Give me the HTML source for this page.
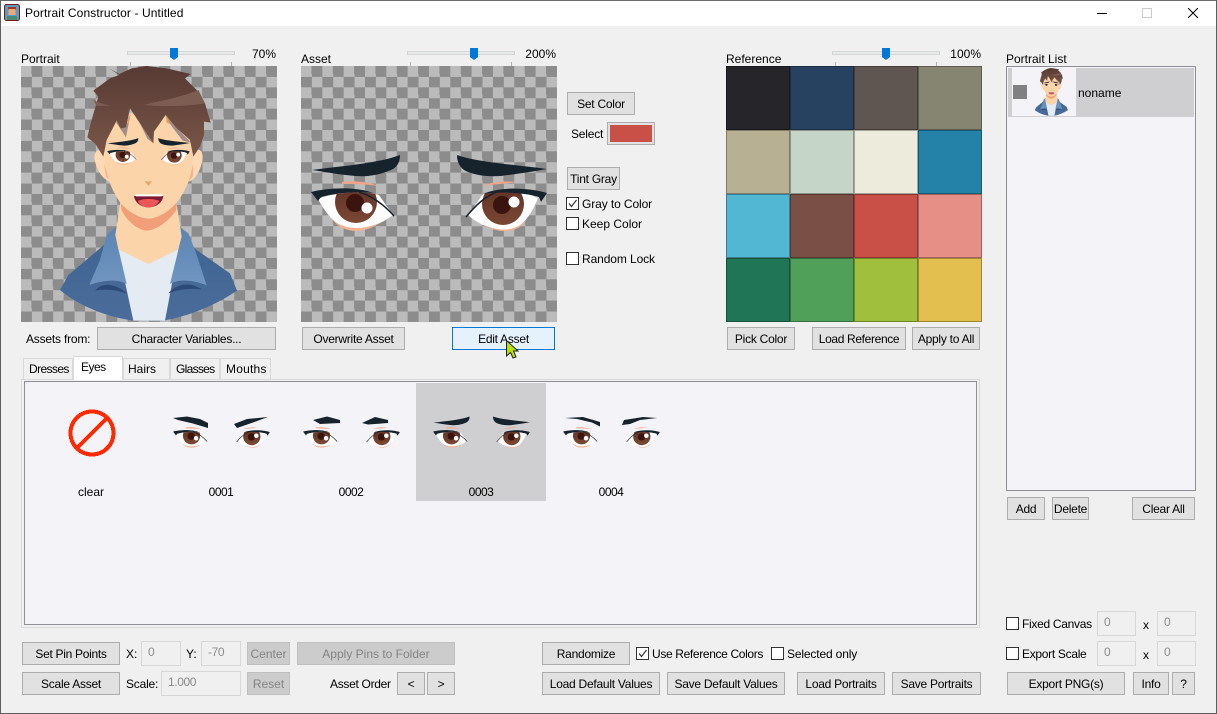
<!DOCTYPE html>
<html><head><meta charset="utf-8"><title>Portrait Constructor - Untitled</title>
<style>
*{box-sizing:border-box}
html,body{margin:0;padding:0;background:#f0f0f0;overflow:hidden}
#w{position:relative;width:1217px;height:714px;background:#f0f0f0;font:12px "Liberation Sans",sans-serif;color:#000;overflow:hidden}
#w div,#w svg.a{position:absolute}
.b{background:#e1e1e1;border:1px solid #adadad;display:flex;align-items:center;justify-content:center;white-space:nowrap;height:23px;top:0;letter-spacing:-.25px}
.d{background:#ccc;border:1px solid #bfbfbf;color:#838383;letter-spacing:0}
.t{white-space:nowrap;line-height:14px}
.n{letter-spacing:-.3px}
.i{background:#f0f0f0;border:1px solid #d7d7d7;color:#8b8b8b;padding:3px 0 0 6px;height:25px;white-space:nowrap;letter-spacing:-.4px}
.c{width:13px;height:13px;background:#fff;border:1px solid #333}
.ck{position:absolute;display:block;left:0;top:0}
.chk{background:repeating-conic-gradient(#8c8c8c 0 25%,#bbb 0 50%) 0 0/21.333px 21.333px;width:256px;height:256px;top:66px;overflow:hidden}
.tr{width:108px;height:4px;top:51px;background:#e7eaea;border:1px solid #d6d6d6}
.tk{width:1px;height:4px;top:62px;background:#b5b5b5}
.tab{top:358px;height:21px;background:#f0f0f0;border:1px solid #d9d9d9;border-bottom:none;padding:3px 0 0 5px;line-height:15px;white-space:nowrap}
.cell{width:64px;height:64px;box-shadow:inset 0 0 0 1px rgba(0,0,0,.3)}
.l{top:485px;width:130px;text-align:center;line-height:14px;letter-spacing:-.5px}
</style></head><body><div id="w">
<svg width="0" height="0" style="position:absolute"><defs>
<linearGradient id="hg" x1="0" y1="0" x2="0" y2="1"><stop offset="0" stop-color="#573a34"/><stop offset="1" stop-color="#7a5648"/></linearGradient>
<linearGradient id="jg" x1="0" y1="0" x2="0" y2="1"><stop offset="0" stop-color="#3f6491"/><stop offset="1" stop-color="#4a6c9a"/></linearGradient>
<linearGradient id="cg" x1="0" y1="0" x2="0" y2="1"><stop offset="0" stop-color="#5b83b2"/><stop offset="1" stop-color="#7096c0"/></linearGradient>
<linearGradient id="ir" x1="0" y1="0" x2="0" y2="1"><stop offset="0" stop-color="#5e2f25"/><stop offset="1" stop-color="#7a4833"/></linearGradient>
<clipPath id="el"><path d="M17 133C28 128 60 123 78 129L92 149C80 158 66 164 52 164C38 163 26 150 17 133Z"/></clipPath>
<clipPath id="er"><path d="M237 132C226 126 200 122 182 128L167 149C177 158 190 164 206 164C220 163 230 150 237 132Z"/></clipPath>
<g id="eyes">
<path fill="#f0a58a" d="M41 116C52 114 68 116 78 120C66 118 52 118 41 118Z"/>
<path fill="#f0a58a" d="M181 120C192 115 206 115 216 116C205 118 192 118 181 120Z"/>
<path fill="#fff" d="M17 133C28 128 60 123 78 129L92 149C80 158 66 164 52 164C38 163 26 150 17 133Z"/>
<path fill="#f4b28e" d="M32 154C42 163 60 165 78 157C64 168 42 168 32 154Z"/>
<g clip-path="url(#el)"><circle cx="55" cy="136" r="21" fill="url(#ir)"/><circle cx="54" cy="137" r="9" fill="#3a1510"/></g>
<circle cx="66" cy="142" r="5.500" fill="#fff"/>
<path fill="#16222c" d="M10 126C25 122 55 120 72 127C55 125 35 127 20 131L17 135Z"/>
<path fill="none" stroke="#16222c" stroke-width="1.500" d="M58 126C72 130 84 140 93 150"/>
<path fill="#fff" d="M237 132C226 126 200 122 182 128L167 149C177 158 190 164 206 164C220 163 230 150 237 132Z"/>
<path fill="#f4b28e" d="M182 158C196 166 214 166 226 154C216 168 196 168 182 158Z"/>
<g clip-path="url(#er)"><circle cx="202" cy="138" r="21" fill="url(#ir)"/><circle cx="201" cy="139" r="9" fill="#3a1510"/></g>
<circle cx="213" cy="136" r="5.500" fill="#fff"/>
<path fill="#16222c" d="M246 127C230 122 200 120 182 128C200 125 225 127 238 131L240 136Z"/>
<path fill="none" stroke="#16222c" stroke-width="1.500" d="M198 125C184 130 174 140 165 151"/>
</g>
<g id="brows3">
<path fill="#16222c" d="M11 104C40 100 75 98 99 89C99 95 97 100 92 103C80 109 65 111 55 110C40 109 25 106 11 104Z"/>
<path fill="#16222c" d="M156 89C175 96 215 99 246 103C230 106 215 108 200 110C185 111 172 109 163 104C158 100 156 95 156 89Z"/>
</g>
<g id="portrait">
<path fill="url(#jg)" d="M180 870L205 825L300 745L360 690L530 690L590 750L690 820L711 872C640 920 560 950 490 962H400C320 950 240 920 180 870Z"/>
<path fill="#e4ebf3" d="M352 740L445 790L537 740L495 962H400Z"/>
<path fill="#2c4a78" d="M285 872C305 845 350 850 382 882C350 868 315 866 285 872Z"/>
<path fill="#2c4a78" d="M505 880C530 850 570 845 605 868C570 864 535 868 505 880Z"/>
<path fill="url(#cg)" d="M268 855L300 780L320 705L360 670L348 710L356 750L380 852C350 835 305 842 268 855Z"/>
<path fill="url(#cg)" d="M620 856L585 750L565 700L528 672L545 710L535 750L510 852C540 835 585 842 620 856Z"/>
<path fill="#fcd4a9" d="M362 600H528L545 710L535 748L445 792L355 748L346 705Z"/>
<path fill="#f19f78" d="M362 600L364 630C385 670 420 692 440 692C470 690 505 665 529 630L530 600Z"/>
<path fill="#ffd8b4" d="M283 470C285 445 305 445 318 455L332 545C305 540 285 500 283 470Z"/>
<path fill="#ffd8b4" d="M608 470C606 445 590 445 578 455L565 545C590 540 606 500 608 470Z"/>
<path fill="#f5b08e" d="M312 490L332 545L318 530Z"/>
<path fill="#f5b08e" d="M580 490L565 545L578 530Z"/>
<path fill="#fcd4a9" d="M315 340H580L578 480C575 530 560 570 528 610C500 640 470 655 445 656C420 655 390 640 362 610C335 570 318 530 315 480Z"/>
<path fill="#a08c88" d="M345 362L378 412L392 340L378 380Z"/>
<path fill="#a08c88" d="M415 360L442 416L460 430L450 395Z"/>
<path fill="#a08c88" d="M497 345L530 385L574 428L548 422L510 372Z"/>
<path fill="url(#hg)" d="M328 205L358 222L395 205L440 198L500 205L572 222L555 235L590 270L615 310L632 368L612 365L612 405L600 440L580 470L570 420L530 385L497 345L462 395L460 430L420 370L390 325L378 382L362 385L350 362L320 420L310 470L285 430L262 412L272 370L295 290L280 272L330 235L358 225Z"/>
<path fill="#7d5c52" d="M280 300C300 310 320 315 335 317L290 318Z"/>
<path fill="#7d5c52" d="M430 315C490 300 550 290 595 270L615 310C570 317 500 322 430 315Z"/>
<path fill="#e8a050" d="M382 365L388 340L386 375Z"/>
<path fill="#e8a050" d="M497 345L510 372L500 368Z"/>
<use href="#eyes" transform="translate(311 321) scale(1.05)"/>
<use href="#brows3" transform="translate(311 321) scale(1.05)"/>
<path fill="#e4a56a" d="M433 542C440 546 450 546 457 542L445 558Z"/>
<path fill="#7a1c30" d="M402 588H490C488 606 470 622 445 622C422 622 404 606 402 588Z"/>
<path fill="#fff" d="M405 583H488L486 589H408Z"/>
<path fill="#ec5656" d="M413 603C430 595 462 595 478 603C470 616 458 622 445 622C432 622 420 616 413 603Z"/>
</g>
</defs></svg>

<!-- title bar -->
<div style="left:0;top:0;width:1217px;height:26px;background:#fff"></div>
<svg class="a" style="left:4px;top:4px" width="16" height="17" viewBox="0 0 16 17"><rect x=".5" y=".5" width="15" height="16" rx="2" fill="#5a9bc8" stroke="#7a1a10"/><rect x="4" y="3" width="8" height="3" fill="#a33a1c"/><rect x="4.500" y="5" width="7" height="6" fill="#f0a878"/><rect x="3" y="12" width="10" height="4" fill="#4a8a70"/></svg>
<div class="t" style="left:25px;top:6px;letter-spacing:.1px">Portrait Constructor - Untitled</div>
<div style="left:1097px;top:13px;width:10px;height:1px;background:#000"></div>
<div style="left:1142px;top:8px;width:10px;height:10px;border:1px solid #ccc"></div>
<svg class="a" style="left:1188px;top:8px" width="10" height="10"><path d="M0 0L10 10M10 0L0 10" stroke="#000" fill="none"/></svg>

<!-- labels & sliders -->
<div class="t" style="left:21px;top:52px">Portrait</div>
<div class="t" style="left:301px;top:52px">Asset</div>
<div class="t" style="left:726px;top:52px">Reference</div>
<div class="t" style="left:1006px;top:52px">Portrait List</div>
<div class="tr" style="left:127px"></div><div class="tk" style="left:130px"></div><div class="tk" style="left:231px"></div>
<div class="tr" style="left:407px"></div><div class="tk" style="left:410px"></div><div class="tk" style="left:511px"></div>
<div class="tr" style="left:832px"></div><div class="tk" style="left:835px"></div><div class="tk" style="left:936px"></div>
<svg class="a" style="left:170px;top:48px" width="8" height="12"><path d="M0 0H8V9L4 12L0 9Z" fill="#0078d7"/></svg>
<svg class="a" style="left:470px;top:48px" width="8" height="12"><path d="M0 0H8V9L4 12L0 9Z" fill="#0078d7"/></svg>
<svg class="a" style="left:882px;top:48px" width="8" height="12"><path d="M0 0H8V9L4 12L0 9Z" fill="#0078d7"/></svg>
<div class="t" style="right:941px;top:47px">70%</div>
<div class="t" style="right:661px;top:47px">200%</div>
<div class="t" style="right:236px;top:47px">100%</div>

<!-- portrait -->
<div class="chk" style="left:21px"><svg width="256" height="256" viewBox="63 198 768 768"><use href="#portrait"/></svg></div>
<!-- asset -->
<div class="chk" style="left:301px"><svg width="256" height="256" viewBox="0 0 256 256"><use href="#eyes"/><use href="#brows3"/></svg></div>

<div class="t n" style="left:26px;top:332px;letter-spacing:-.2px">Assets from:</div>
<div class="b" style="left:97px;top:327px;width:179px">Character Variables...</div>
<div class="b" style="left:302px;top:327px;width:103px">Overwrite Asset</div>
<div class="b" style="left:452px;top:327px;width:103px;background:#e5f1fb;border-color:#0078d7">Edit Asset</div>

<div class="b" style="left:567px;top:92px;width:68px">Set Color</div>
<div class="t" style="left:571px;top:127px;letter-spacing:-.2px">Select</div>
<div class="b" style="left:607px;top:122px;width:48px"><div style="left:2px;top:2px;width:42px;height:17px;background:#c85047"></div></div>
<div class="b" style="left:567px;top:167px;width:53px">Tint Gray</div>
<div class="c" style="left:566px;top:197px"><svg class="ck" width="11" height="11"><path d="M2 5.500L4.500 8.500L9.500 2" fill="none" stroke="#333" stroke-width="1.200"/></svg></div>
<div class="t" style="left:582px;top:197px;letter-spacing:-.1px">Gray to Color</div>
<div class="c" style="left:566px;top:217px"></div>
<div class="t" style="left:582px;top:217px">Keep Color</div>
<div class="c" style="left:566px;top:252px"></div>
<div class="t" style="left:582px;top:252px;letter-spacing:-.1px">Random Lock</div>

<!-- reference -->
<div class="cell" style="left:726px;top:66px;background:#25252a"></div>
<div class="cell" style="left:790px;top:66px;background:#274260"></div>
<div class="cell" style="left:854px;top:66px;background:#605651"></div>
<div class="cell" style="left:918px;top:66px;background:#868572"></div>
<div class="cell" style="left:726px;top:130px;background:#b8b093"></div>
<div class="cell" style="left:790px;top:130px;background:#c5d5c8"></div>
<div class="cell" style="left:854px;top:130px;background:#ecebdc"></div>
<div class="cell" style="left:918px;top:130px;background:#2481a8"></div>
<div class="cell" style="left:726px;top:194px;background:#52b7d2"></div>
<div class="cell" style="left:790px;top:194px;background:#7a4f45"></div>
<div class="cell" style="left:854px;top:194px;background:#c85047"></div>
<div class="cell" style="left:918px;top:194px;background:#e68f87"></div>
<div class="cell" style="left:726px;top:258px;background:#207556"></div>
<div class="cell" style="left:790px;top:258px;background:#51a05a"></div>
<div class="cell" style="left:854px;top:258px;background:#a0bf3d"></div>
<div class="cell" style="left:918px;top:258px;background:#e2bf4f"></div>
<div class="b" style="left:727px;top:327px;width:68px">Pick Color</div>
<div class="b" style="left:812px;top:327px;width:94px;letter-spacing:-.35px">Load Reference</div>
<div class="b" style="left:912px;top:327px;width:68px">Apply to All</div>

<!-- tabs -->
<div style="left:21px;top:379px;width:959px;height:249px;background:#f0f0f0;border:1px solid #d9d9d9"></div>
<div class="tab" style="left:23px;width:50px;letter-spacing:-.6px">Dresses</div>
<div class="tab" style="left:123px;width:47px;padding-left:4px">Hairs</div>
<div class="tab" style="left:170px;width:50px;letter-spacing:-.7px">Glasses</div>
<div class="tab" style="left:220px;width:51px;letter-spacing:.2px">Mouths</div>
<div class="tab" style="left:73px;top:356px;width:50px;height:24px;background:#fff;padding:3px 0 0 7px;letter-spacing:-.5px;z-index:2">Eyes</div>
<div style="left:24px;top:381px;width:953px;height:244px;background:#f3f3f8;border:1px solid #8e8e94"></div>
<div style="left:416px;top:383px;width:130px;height:118px;background:#cfcfd1"></div>
<svg class="a" style="left:0;top:0" width="1217" height="714" viewBox="0 0 1217 714">
<g shape-rendering="crispEdges">
<circle cx="92" cy="433" r="21.500" fill="none" stroke="#ff2a00" stroke-width="4"/>
<path d="M77 448L107 418" stroke="#ff2a00" stroke-width="4" fill="none"/>
</g>
<use href="#eyes" transform="translate(169 380) scale(.41)"/>
<use href="#eyes" transform="translate(299 380) scale(.41)"/>
<use href="#eyes" transform="translate(429 380) scale(.41)"/>
<use href="#brows3" transform="translate(429 380) scale(.41)"/>
<use href="#eyes" transform="translate(559 380) scale(.41)"/>
<g fill="#16222c">
<path d="M173 418L187 416.500L200 419L208 423L208 428L193 423.500L178 420Z"/>
<path d="M234 424L247 419L268 417L253 422.500L237 428Z"/>
<path d="M313 420L327 416.500L340 420L340 423L320 424Z"/>
<path d="M362 423L375 417L388 420L388 423L368 424.500Z"/>
<path d="M565 418L583 417L600 422L600 426.500L592 422.500L577 419Z"/>
<path d="M622 425L624 420L643 417L657 418L640 420L630 424Z"/>
</g>
</svg>
<div class="l" style="left:26px;letter-spacing:0">clear</div>
<div class="l" style="left:156px">0001</div>
<div class="l" style="left:286px">0002</div>
<div class="l" style="left:416px">0003</div>
<div class="l" style="left:546px">0004</div>

<!-- portrait list -->
<div style="left:1006px;top:66px;width:190px;height:425px;background:#f3f3f8;border:1px solid #8e8e94"></div>
<div style="left:1008px;top:68px;width:186px;height:49px;background:#cfcfd1"></div>
<div style="left:1012px;top:68px;width:64px;height:48px;background:#f3f3f8"></div>
<div style="left:1013px;top:85px;width:14px;height:14px;background:#808080"></div>
<svg class="a" style="left:1012px;top:68px" width="64" height="48" viewBox="-184 198 1024 768"><use href="#portrait"/></svg>
<div class="t" style="left:1078px;top:86px">noname</div>
<div class="b" style="left:1007px;top:497px;width:38px">Add</div>
<div class="b" style="left:1052px;top:497px;width:37px">Delete</div>
<div class="b" style="left:1132px;top:497px;width:63px">Clear All</div>

<div class="c" style="left:1006px;top:617px"></div>
<div class="t n" style="left:1022px;top:617px">Fixed Canvas</div>
<div class="i" style="left:1097px;top:611px;width:39px">0</div>
<div class="t" style="left:1143px;top:618px">x</div>
<div class="i" style="left:1157px;top:611px;width:39px">0</div>
<div class="c" style="left:1006px;top:647px"></div>
<div class="t n" style="left:1022px;top:647px">Export Scale</div>
<div class="i" style="left:1097px;top:641px;width:39px">0</div>
<div class="t" style="left:1143px;top:648px">x</div>
<div class="i" style="left:1157px;top:641px;width:39px">0</div>
<div class="b" style="left:1007px;top:672px;width:118px">Export PNG(s)</div>
<div class="b" style="left:1133px;top:672px;width:36px">Info</div>
<div class="b" style="left:1172px;top:672px;width:23px">?</div>

<!-- bottom -->
<div class="b" style="left:22px;top:642px;width:98px;letter-spacing:-.3px">Set Pin Points</div>
<div class="t" style="left:126px;top:647px">X:</div>
<div class="i" style="left:141px;top:641px;width:40px">0</div>
<div class="t" style="left:186px;top:647px">Y:</div>
<div class="i" style="left:201px;top:641px;width:40px">-70</div>
<div class="b d" style="left:247px;top:642px;width:43px">Center</div>
<div class="b d" style="left:297px;top:642px;width:158px">Apply Pins to Folder</div>
<div class="b" style="left:22px;top:672px;width:98px">Scale Asset</div>
<div class="t" style="left:126px;top:677px;letter-spacing:-.2px">Scale:</div>
<div class="i" style="left:161px;top:671px;width:80px">1.000</div>
<div class="b d" style="left:247px;top:672px;width:43px">Reset</div>
<div class="t n" style="left:330px;top:677px">Asset Order</div>
<div class="b" style="left:397px;top:672px;width:28px">&lt;</div>
<div class="b" style="left:427px;top:672px;width:28px">&gt;</div>

<div class="b" style="left:542px;top:642px;width:88px">Randomize</div>
<div class="c" style="left:636px;top:647px"><svg class="ck" width="11" height="11"><path d="M2 5.500L4.500 8.500L9.500 2" fill="none" stroke="#333" stroke-width="1.200"/></svg></div>
<div class="t" style="left:652px;top:647px;letter-spacing:-.35px">Use Reference Colors</div>
<div class="c" style="left:771px;top:647px"></div>
<div class="t" style="left:787px;top:647px;letter-spacing:-.15px">Selected only</div>
<div class="b" style="left:542px;top:672px;width:118px">Load Default Values</div>
<div class="b" style="left:667px;top:672px;width:118px">Save Default Values</div>
<div class="b" style="left:797px;top:672px;width:88px">Load Portraits</div>
<div class="b" style="left:892px;top:672px;width:89px">Save Portraits</div>

<!-- cursor -->
<svg class="a" style="left:504px;top:338px;z-index:5" width="18" height="22"><path d="M2.500 2.500L14 13L9.500 13L12 19L9 20L6.500 14.500L2.500 18Z" fill="#b8e000" stroke="#222" stroke-width="1"/></svg>

<!-- window border -->
<div style="left:0;top:0;width:1217px;height:714px;border:1px solid #5e5e5e;border-top-color:#6a6a6a;z-index:9"></div>
</div></body></html>
